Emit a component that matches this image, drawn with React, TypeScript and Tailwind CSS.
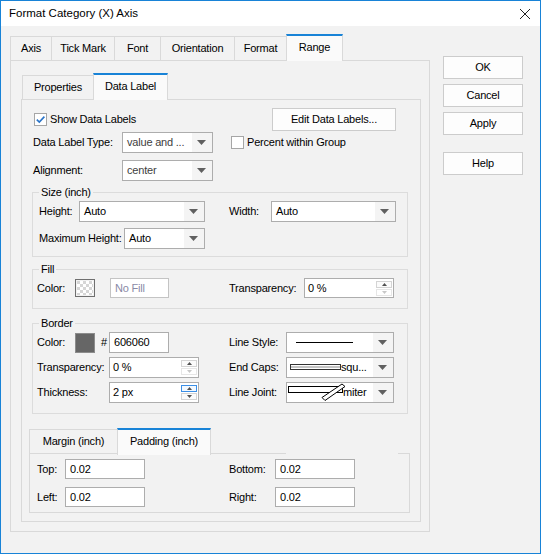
import type { ReactNode } from "react";

// Down arrow used by every drop-down
const Arrow = () => (
  <svg width="9" height="5" viewBox="0 0 9 5">
    <polygon points="0,0 9,0 4.5,5" fill="#606060" />
  </svg>
);

function Combo({ className = "", children }: { className?: string; children: ReactNode }) {
  return (
    <div className={`flex h-[21px] shrink-0 border border-[#adadad] bg-white ${className}`}>
      <div className="flex flex-1 items-center overflow-hidden whitespace-nowrap pl-[4px]">{children}</div>
      <div className="flex w-[20px] items-center justify-center bg-[#f4f4f4] pr-[2px]">
        <Arrow />
      </div>
    </div>
  );
}

function Spin({
  value,
  className = "",
  focused = false,
  downEnabled = false,
}: {
  value: string;
  className?: string;
  focused?: boolean;
  downEnabled?: boolean;
}) {
  return (
    <div className={`flex shrink-0 border border-[#adadad] bg-white ${className}`}>
      <div className="flex flex-1 items-center pl-[3px]">{value}</div>
      <div className="mr-[1px] flex w-[16px] flex-col justify-center gap-[1px]">
        <div
          className={`flex h-[7px] items-center justify-center border ${
            focused ? "border-[#3a8ee6] bg-[#f2f8fe]" : "border-[#d4d4d4] bg-[#fbfbfb]"
          }`}
        >
          <svg width="5" height="3" viewBox="0 0 5 3">
            <polygon points="0,3 5,3 2.5,0" fill="#505050" />
          </svg>
        </div>
        <div
          className={`flex h-[7px] items-center justify-center border ${
            downEnabled ? "border-[#d4d4d4] bg-[#fbfbfb]" : "border-[#e6e6e6] bg-white"
          }`}
        >
          <svg width="5" height="3" viewBox="0 0 5 3">
            <polygon points="0,0 5,0 2.5,3" fill={downEnabled ? "#505050" : "#c8c8c8"} />
          </svg>
        </div>
      </div>
    </div>
  );
}

function Check({ checked = false, className = "" }: { checked?: boolean; className?: string }) {
  return (
    <div className={`flex h-[13px] w-[13px] shrink-0 items-center justify-center border border-[#a6a6a6] bg-white ${className}`}>
      {checked && (
        <svg width="11" height="11" viewBox="0 0 11 11">
          <path d="M1.8 5.6 L4.3 8.1 L9.4 2.6" fill="none" stroke="#2a74c8" strokeWidth="1.6" />
        </svg>
      )}
    </div>
  );
}

function Button({ className = "", children }: { className?: string; children: ReactNode }) {
  return (
    <div className={`flex shrink-0 items-center justify-center border border-[#cccccc] bg-[#fdfdfd] ${className}`}>
      {children}
    </div>
  );
}

function Input({ value, className = "", muted = false }: { value: string; className?: string; muted?: boolean }) {
  return (
    <div
      className={`flex shrink-0 items-center border bg-white pl-[4px] ${
        muted ? "border-[#c4c4c4] text-[#8a8aa6]" : "border-[#adadad]"
      } ${className}`}
    >
      {value}
    </div>
  );
}

function Label({ className = "", children }: { className?: string; children: ReactNode }) {
  return <span className={`shrink-0 whitespace-nowrap ${className}`}>{children}</span>;
}

function Tab({ className = "", selected = false, children }: { className?: string; selected?: boolean; children: ReactNode }) {
  return selected ? (
    <div
      className={`relative z-10 -mb-[1px] flex h-[27px] items-center justify-center whitespace-nowrap border-x border-t-2 border-x-[#d9d9d9] border-t-[#1883d7] bg-[#fafafa] pb-[2px] ${className}`}
    >
      {children}
    </div>
  ) : (
    <div
      className={`flex h-[24px] items-center justify-center whitespace-nowrap border-l border-t border-[#d9d9d9] bg-[#f2f2f2] ${className}`}
    >
      {children}
    </div>
  );
}

function Group({ title, className = "", children }: { title: string; className?: string; children: ReactNode }) {
  return (
    <fieldset className={`ml-[3px] w-[376px] border border-[#dcdcdc] ${className}`}>
      <legend className="ml-[6px] px-[2px] leading-[12px]">{title}</legend>
      {children}
    </fieldset>
  );
}

const Checker = () => (
  <svg width="16" height="14" viewBox="0 0 16 14">
    <defs>
      <pattern id="chk" width="6" height="6" patternUnits="userSpaceOnUse">
        <rect width="6" height="6" fill="#ffffff" />
        <rect width="3" height="3" fill="#d6d6d6" />
        <rect x="3" y="3" width="3" height="3" fill="#d6d6d6" />
      </pattern>
    </defs>
    <rect width="16" height="14" fill="url(#chk)" />
  </svg>
);

export default function App() {
  return (
    <div className="flex h-[554px] w-[541px] flex-col border border-[#1883d7] bg-[#f2f2f2] font-['Liberation_Sans',Arial,sans-serif] text-[11px] tracking-[-0.2px] text-black">
      {/* title bar */}
      <div className="flex h-[25px] shrink-0 items-center bg-white pl-[8px] pr-[9px]">
        <span className="text-[11.5px] tracking-normal">Format Category (X) Axis</span>
        <svg className="ml-auto" width="12" height="12" viewBox="0 0 12 12">
          <path d="M1 1 L11 11 M11 1 L1 11" stroke="#222" strokeWidth="1" />
        </svg>
      </div>

      <div className="flex flex-1">
        <div className="ml-[9px] mt-[8px] w-[420px]">
          <div className="flex h-[26px] items-end">
            <Tab className="w-[41px]">Axis</Tab>
            <Tab className="w-[63px]">Tick Mark</Tab>
            <Tab className="w-[46px]">Font</Tab>
            <Tab className="w-[74px]">Orientation</Tab>
            <Tab className="w-[52px]">Format</Tab>
            <Tab className="w-[57px]" selected>
              Range
            </Tab>
          </div>

          <div className="h-[472px] border border-[#d9d9d9] pl-[10px] pt-[12px]">
            <div className="ml-[1px] flex h-[26px] items-end">
              <Tab className="w-[71px]">Properties</Tab>
              <Tab className="w-[75px]" selected>
                Data Label
              </Tab>
            </div>

            <div className="h-[423px] w-[400px] border border-[#d9d9d9] pl-[7px] pt-[8px]">
              <div className="flex h-[23px] items-center">
                <div className="flex w-[243px] shrink-0 items-center">
                  <Check checked className="ml-[5px]" />
                  <Label className="ml-[3px]">Show Data Labels</Label>
                </div>
                <Button className="h-[23px] w-[124px]">Edit Data Labels...</Button>
              </div>

              <div className="mt-[1px] flex h-[21px] items-center">
                <Label className="ml-[4px] w-[89px]">Data Label Type:</Label>
                <Combo className="w-[91px] text-[#404040]">value and ...</Combo>
                <Check className="ml-[18px]" />
                <Label className="ml-[3px]">Percent within Group</Label>
              </div>

              <div className="mt-[7px] flex h-[21px] items-center">
                <Label className="ml-[4px] w-[89px]">Alignment:</Label>
                <Combo className="w-[91px] text-[#404040]">center</Combo>
              </div>

              <Group title="Size (inch)" className="mt-[5px] pb-[7px]">
                <div className="mt-[3px] flex items-center pl-[6px]">
                  <Label className="w-[40px]">Height:</Label>
                  <Combo className="w-[126px]">Auto</Combo>
                  <Label className="ml-[24px] w-[42px]">Width:</Label>
                  <Combo className="w-[125px]">Auto</Combo>
                </div>
                <div className="mt-[6px] flex items-center pl-[6px]">
                  <Label className="w-[85px]">Maximum Height:</Label>
                  <Combo className="w-[81px]">Auto</Combo>
                </div>
              </Group>

              <Group title="Fill" className="mt-[6px] pb-[10px]">
                <div className="mt-[3px] flex h-[20px] items-center pl-[4px]">
                  <Label className="w-[38px]">Color:</Label>
                  <div className="h-[18px] w-[20px] shrink-0 border border-[#6f6f6f] p-[1px]">
                    <Checker />
                  </div>
                  <Input value="No Fill" muted className="ml-[15px] h-[20px] w-[59px]" />
                  <Label className="ml-[60px] w-[75px]">Transparency:</Label>
                  <Spin value="0 %" className="h-[20px] w-[90px]" />
                </div>
              </Group>

              <Group title="Border" className="mt-[8px] pb-[10px]">
                <div className="mt-[3px] flex flex-col gap-[4px] pl-[4px]">
                  <div className="flex h-[21px] items-center">
                    <Label className="w-[38px]">Color:</Label>
                    <div className="h-[20px] w-[20px] shrink-0 border border-[#8c8c8c] bg-[#666666]" />
                    <Label className="ml-[6px] w-[8px]">#</Label>
                    <Input value="606060" className="h-[21px] w-[60px]" />
                    <Label className="ml-[60px] w-[57px]">Line Style:</Label>
                    <Combo className="w-[108px]">
                      <svg width="62" height="3" viewBox="0 0 62 3">
                        <line x1="5" y1="1.5" x2="62" y2="1.5" stroke="#000" strokeWidth="1" />
                      </svg>
                    </Combo>
                  </div>
                  <div className="flex h-[21px] items-center">
                    <Label className="w-[72px]">Transparency:</Label>
                    <Spin value="0 %" className="h-[21px] w-[90px]" />
                    <Label className="ml-[30px] w-[57px]">End Caps:</Label>
                    <Combo className="w-[108px]">
                      <svg width="51" height="7" viewBox="0 0 51 7" className="-ml-[1px] shrink-0">
                        <rect x="0.5" y="0.5" width="50" height="5" fill="#fff" stroke="#333" />
                        <line x1="1" y1="3" x2="50" y2="3" stroke="#888" />
                      </svg>
                      <span>squ...</span>
                    </Combo>
                  </div>
                  <div className="flex h-[21px] items-center">
                    <Label className="w-[72px]">Thickness:</Label>
                    <Spin value="2 px" className="h-[21px] w-[90px]" focused downEnabled />
                    <Label className="ml-[30px] w-[57px]">Line Joint:</Label>
                    <Combo className="w-[108px]">
                      <svg width="55" height="19" viewBox="0 0 55 19" className="-ml-[3px] shrink-0 overflow-visible">
                        <rect x="0.5" y="3.5" width="54" height="6" fill="#fff" stroke="#000" />
                        <polygon points="34,14.5 37,17.5 57,3.5 54,1" fill="#fff" stroke="#000" />
                      </svg>
                      <span>miter</span>
                    </Combo>
                  </div>
                </div>
              </Group>

              {/* Margin / Padding sub tabs */}
              <div className="mt-[13px] flex h-[27px] w-[381px] items-end">
                <div className="flex h-[25px] w-[88px] items-center justify-center whitespace-nowrap border-b border-l border-t border-[#d9d9d9] bg-[#f2f2f2]">
                  Margin (inch)
                </div>
                <div className="relative z-10 -mb-[1px] flex h-[27px] w-[94px] items-center justify-center whitespace-nowrap border-x border-t-2 border-x-[#d9d9d9] border-t-[#1883d7] bg-[#fafafa] pb-[3px]">
                  Padding (inch)
                </div>
                <div className="h-[1px] w-[75px] bg-[#d9d9d9]" />
                <div className="w-[112px]" />
                <div className="h-[1px] flex-1 bg-[#d9d9d9]" />
              </div>
              <div className="flex w-[381px] flex-col gap-[8px] border-x border-b border-[#d9d9d9] pb-[5px] pl-[7px] pt-[5px]">
                <div className="flex h-[20px] items-center">
                  <Label className="w-[28px]">Top:</Label>
                  <Input value="0.02" className="h-[20px] w-[80px]" />
                  <Label className="ml-[84px] w-[46px]">Bottom:</Label>
                  <Input value="0.02" className="h-[20px] w-[80px]" />
                </div>
                <div className="flex h-[20px] items-center">
                  <Label className="w-[28px]">Left:</Label>
                  <Input value="0.02" className="h-[20px] w-[80px]" />
                  <Label className="ml-[84px] w-[46px]">Right:</Label>
                  <Input value="0.02" className="h-[20px] w-[80px]" />
                </div>
              </div>
            </div>
          </div>
        </div>

        <div className="ml-[13px] mt-[30px] flex w-[80px] flex-col">
          <Button className="h-[23px]">OK</Button>
          <Button className="mt-[5px] h-[23px]">Cancel</Button>
          <Button className="mt-[5px] h-[23px]">Apply</Button>
          <Button className="mt-[17px] h-[23px]">Help</Button>
        </div>
      </div>
    </div>
  );
}
